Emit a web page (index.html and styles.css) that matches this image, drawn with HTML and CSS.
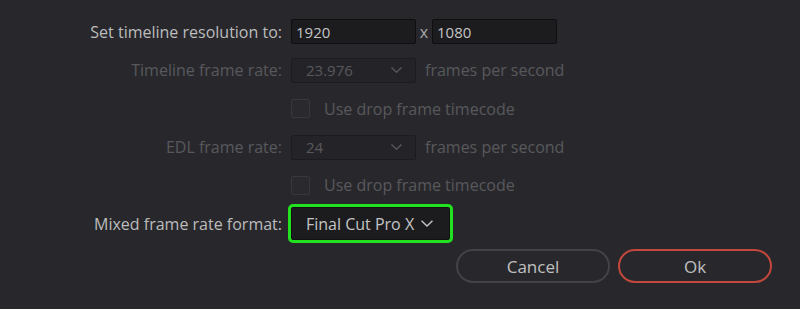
FILE: index.html
```html
<!DOCTYPE html>
<html lang="en">
<head>
  <meta charset="UTF-8" />
  <title>Timeline settings</title>
  <link rel="stylesheet" href="styles.css">
</head>
<body>
  <div class="dialog">
    <div class="form">
      <label class="label">Set timeline resolution to:</label>
      <div class="control">
        <input class="field" type="text" value="1920" />
        <span class="times">x</span>
        <input class="field" type="text" value="1080" />
      </div>

      <label class="label disabled">Timeline frame rate:</label>
      <div class="control">
        <div class="select disabled">
          <span>23.976</span>
          <svg class="chev" viewBox="0 0 11 6"><polyline points="0.5,0.5 5.5,5.3 10.5,0.5" /></svg>
        </div>
        <span class="unit disabled">frames per second</span>
      </div>

      <div></div>
      <div class="control">
        <span class="check"></span>
        <span class="check-text disabled">Use drop frame timecode</span>
      </div>

      <label class="label disabled">EDL frame rate:</label>
      <div class="control">
        <div class="select disabled">
          <span>24</span>
          <svg class="chev" viewBox="0 0 11 6"><polyline points="0.5,0.5 5.5,5.3 10.5,0.5" /></svg>
        </div>
        <span class="unit disabled">frames per second</span>
      </div>

      <div></div>
      <div class="control">
        <span class="check"></span>
        <span class="check-text disabled">Use drop frame timecode</span>
      </div>

      <label class="label">Mixed frame rate format:</label>
      <div class="control">
        <div class="select mixed highlight">
          <span>Final Cut Pro X</span>
          <svg class="chev" viewBox="0 0 11 6"><polyline points="0.5,0.5 5.5,5.3 10.5,0.5" /></svg>
        </div>
      </div>
    </div>

    <div class="actions">
      <button class="btn">Cancel</button>
      <button class="btn primary">Ok</button>
    </div>
  </div>
</body>
</html>
```

FILE: styles.css
```css
* {
  box-sizing: border-box;
  margin: 0;
  padding: 0;
}

body {
  background: #28282c;
  font-family: 'Open Sans', 'Noto Sans', sans-serif;
  font-size: 16px;
  color: #bcbcbc;
  width: 800px;
  height: 309px;
  overflow: hidden;
}

.dialog {
  padding-top: 12px;
}

.form {
  display: grid;
  grid-template-columns: 282px auto;
  grid-template-rows: 39px 38px 39px 38px 38px 39px;
  column-gap: 9px;
  align-items: center;
}

.label {
  text-align: right;
  white-space: nowrap;
}

.disabled {
  color: #58585c;
}

.control {
  display: flex;
  align-items: center;
}

.field {
  width: 125px;
  height: 25px;
  background: #1c1c1f;
  border: 1px solid #0f0f11;
  border-radius: 2px;
  color: #c4c4c4;
  font-family: inherit;
  font-size: 15px;
  padding: 0 4px;
  outline: none;
}

.times {
  width: 16px;
  text-align: center;
  color: #a8a8a8;
}

.select {
  width: 125px;
  height: 25px;
  display: flex;
  align-items: center;
  justify-content: space-between;
  padding: 0 13px 0 14px;
  background: #242428;
  border: 1px solid #1c1c1f;
  border-radius: 2px;
  font-size: 15px;
}

.chev {
  width: 11px;
  height: 6px;
  fill: none;
  stroke: currentColor;
  stroke-width: 1.3;
}

.mixed {
  width: 159px;
  height: 33px;
  background: #1c1c1f;
  border-color: #111113;
  color: #c4c4c4;
  padding: 0 16px 0 14px;
  font-size: 16px;
}

.mixed .chev {
  width: 12px;
  height: 7px;
}

.highlight {
  outline: 3px solid #22e21f;
}

.unit {
  margin-left: 9px;
}

.check {
  width: 19px;
  height: 19px;
  border: 1px solid #38383c;
  background: #2a2a2e;
  border-radius: 2px;
}

.check-text {
  margin-left: 14px;
}

.actions {
  display: flex;
  justify-content: flex-end;
  gap: 8px;
  padding-right: 28px;
  margin-top: 6px;
}

.btn {
  width: 154px;
  height: 34px;
  border-radius: 17px;
  background: transparent;
  border: 2px solid #424247;
  color: #c0c0c0;
  font-family: inherit;
  font-size: 17px;
}

.btn.primary {
  border-color: #c2473d;
}
```
